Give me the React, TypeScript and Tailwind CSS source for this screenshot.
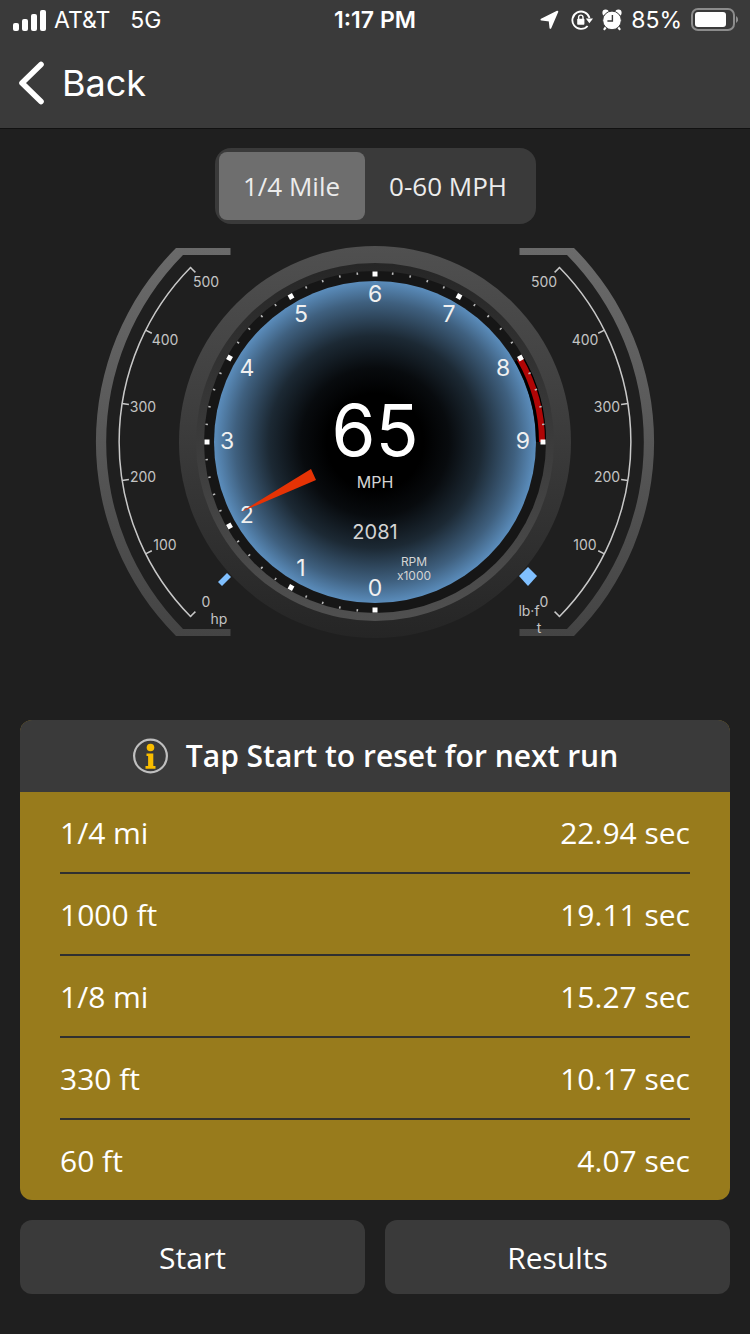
import React, { useState } from 'react';

interface Split {
  label: string;
  time: string;
}

const SPLITS: Split[] = [
  { label: '1/4 mi', time: '22.94 sec' },
  { label: '1000 ft', time: '19.11 sec' },
  { label: '1/8 mi', time: '15.27 sec' },
  { label: '330 ft', time: '10.17 sec' },
  { label: '60 ft', time: '4.07 sec' },
];

const MODES = [
  { id: 'quarter', label: '1/4 Mile', width: 'w-[146px]' },
  { id: 'sixty', label: '0-60 MPH', width: 'w-[167px]' },
];

// label positions of the side scales, relative to the dial centre
const SIDE_LABELS = [
  { value: 0, x: 169, y: 160 },
  { value: 100, x: 210, y: 103 },
  { value: 200, x: 232, y: 35 },
  { value: 300, x: 232, y: -35 },
  { value: 400, x: 210, y: -102 },
  { value: 500, x: 169, y: -160 },
];

const rad = (deg: number) => (deg * Math.PI) / 180;

const StatusBar: React.FC = () => (
  <div className="relative flex h-10 items-center justify-between px-3 text-[23px] leading-10">
    <div className="flex items-center">
      <svg width="34" height="22" viewBox="0 0 34 22" fill="#fff" aria-hidden="true">
        <rect x="1" y="14" width="6" height="8" rx="2" />
        <rect x="10" y="10" width="6" height="12" rx="2" />
        <rect x="19" y="5" width="6" height="17" rx="2" />
        <rect x="28" y="1" width="6" height="21" rx="2" />
      </svg>
      <span className="ml-2">AT&amp;T</span>
      <span className="ml-5">5G</span>
    </div>
    <span className="absolute inset-x-0 text-center font-semibold">1:17 PM</span>
    <div className="flex items-center">
      <svg width="19" height="20" viewBox="0 0 19 20" aria-hidden="true">
        <path d="M17.4 1.6 L10.4 17.8 L9.6 10.6 L1.4 9.6 Z" fill="#fff" stroke="#fff" strokeWidth="1.8" strokeLinejoin="round" />
      </svg>
      <svg className="ml-3" width="22" height="22" viewBox="0 0 22 22" aria-hidden="true">
        <path d="M16.6 17 A8.7 8.7 0 1 1 18.5 9" fill="none" stroke="#fff" strokeWidth="1.8" />
        <path d="M14.8 9.4 H22 L18.4 14.2 Z" fill="#fff" />
        <rect x="6.2" y="9.8" width="7.2" height="6" rx="0.8" fill="#fff" />
        <path d="M7.6 10.2 V8.3 a2.2 2.2 0 0 1 4.4 0 V10.2" fill="none" stroke="#fff" strokeWidth="1.4" />
      </svg>
      <svg className="ml-2" width="22" height="22" viewBox="0 0 22 22" aria-hidden="true">
        <circle cx="4.6" cy="3.8" r="3.2" fill="#fff" />
        <circle cx="17.4" cy="3.8" r="3.2" fill="#fff" />
        <path d="M5 18 L3.4 20.2 M17 18 L18.6 20.2" stroke="#fff" strokeWidth="2.2" strokeLinecap="round" />
        <circle cx="11" cy="11.4" r="9.3" fill="#fff" stroke="#3a3a3a" strokeWidth="1" />
        <path d="M11.4 6 V12 H6.4" fill="none" stroke="#3a3a3a" strokeWidth="1.4" />
      </svg>
      <span className="ml-2">85%</span>
      <svg className="ml-2" width="48" height="24" viewBox="0 0 48 24" aria-hidden="true">
        <rect x="2" y="1" width="42" height="21" rx="6" fill="none" stroke="#8c8c8c" strokeWidth="2" />
        <rect x="5" y="4" width="31" height="15" rx="3" fill="#fff" />
        <path d="M46 8 a4 4 0 0 1 0 7 Z" fill="#8c8c8c" />
      </svg>
    </div>
  </div>
);

const SideScale: React.FC<{ side: 'left' | 'right' }> = ({ side }) => {
  const dir = side === 'left' ? -1 : 1;
  return (
    <g>
      <g transform={side === 'right' ? 'scale(-1 1)' : undefined}>
        <path
          d="M-144.5 -194 H-199 A275 275 0 0 0 -199 194 H-144.5 V187 H-192 A266 266 0 0 1 -192 -187 H-144.5 Z"
          fill="url(#bracket)"
        />
        <path d="M-184 -175 A249 249 0 0 0 -184 175" fill="none" stroke="#c8c8c8" strokeWidth="1.5" />
        {SIDE_LABELS.map(({ value }) => {
          const a = rad((value / 100 - 2.5) * 17.8);
          return (
            <line
              key={value}
              x1={-7 - 249 * Math.cos(a)}
              y1={-249 * Math.sin(a)}
              x2={-7 - 242 * Math.cos(a)}
              y2={-242 * Math.sin(a)}
              stroke="#c8c8c8"
              strokeWidth="1.5"
            />
          );
        })}
      </g>
      {SIDE_LABELS.map(({ value, x, y }) => (
        <text key={value} x={dir * x} y={y + 5} fontSize="14" fill="#c4c4c4" textAnchor="middle">
          {value}
        </text>
      ))}
    </g>
  );
};

const Gauge: React.FC<{ speed: number; rpm: number }> = ({ speed, rpm }) => {
  const ticks = Array.from({ length: 46 }, (_, i) => i);
  const numbers = Array.from({ length: 10 }, (_, i) => i);

  return (
    <svg
      className="w-full max-w-[560px] font-['Inter',sans-serif]"
      viewBox="-280 -200 560 400"
      role="img"
      aria-label={`${speed} MPH, ${rpm} RPM`}
    >
      <defs>
        <linearGradient id="bezel" x1="0" y1="0" x2="0" y2="1">
          <stop offset="0" stopColor="#505050" />
          <stop offset="1" stopColor="#252525" />
        </linearGradient>
        <linearGradient id="bezelInner" x1="0" y1="0" x2="0" y2="1">
          <stop offset="0" stopColor="#262626" />
          <stop offset="1" stopColor="#505050" />
        </linearGradient>
        <linearGradient id="bracket" x1="0" y1="0" x2="0" y2="1">
          <stop offset="0" stopColor="#6a6a6a" />
          <stop offset="1" stopColor="#444444" />
        </linearGradient>
        <radialGradient id="face">
          <stop offset="0.3" stopColor="#000000" />
          <stop offset="0.46" stopColor="#080b0e" />
          <stop offset="0.66" stopColor="#1c2934" />
          <stop offset="0.87" stopColor="#3f607f" />
          <stop offset="1" stopColor="#5b8dbc" />
        </radialGradient>
      </defs>

      <SideScale side="left" />
      <SideScale side="right" />

      {/* Bezel and dial face */}
      <circle r="196" fill="url(#bezel)" />
      <circle r="179" fill="url(#bezelInner)" />
      <circle r="171" fill="#161616" />
      <circle r="161" fill="url(#face)" />

      {/* Redline from 8 to 9 */}
      <path d="M144 -83 A166 166 0 0 1 166 0" fill="none" stroke="#000" strokeWidth="10" />
      <path d="M144.5 -83.5 A167 167 0 0 1 167 0" fill="none" stroke="#b00606" strokeWidth="6" />

      {ticks.map((i) =>
        i % 5 === 0 ? (
          <rect key={i} x="-2.5" y="165.5" width="5" height="5" fill="#fff" transform={`rotate(${i * 6})`} />
        ) : (
          <rect key={i} x="-0.8" y="168" width="1.6" height="2.4" fill="#bbb" transform={`rotate(${i * 6})`} />
        )
      )}

      {numbers.map((n) => (
        <text
          key={n}
          x={-148 * Math.sin(rad(n * 30))}
          y={147 * Math.cos(rad(n * 30)) + 7}
          fontSize="23"
          fill="#f0f0f0"
          textAnchor="middle"
        >
          {n}
        </text>
      ))}

      {/* Side scale markers and units */}
      <path d="M-148 131 L-144 135 L-153 144 L-157 140 Z" fill="#80c0ff" />
      <path d="M144 134 L153 125 L162 134 L153 144 Z" fill="#80c0ff" />
      <g fontSize="14" fill="#c4c4c4" textAnchor="middle">
        <text x="-156" y="182">hp</text>
        <text x="154" y="174">lb·f</text>
        <text x="164" y="191">t</text>
      </g>

      <path d="M-134 70 L-64 27 L-59 38 Z" fill="#e53305" />

      <g textAnchor="middle" fill="#d4d4d4">
        <text y="14" fontSize="71" fill="#fff">{speed}</text>
        <text y="46" fontSize="16">MPH</text>
        <text y="97" fontSize="20">{rpm}</text>
        <text x="39" y="124" fontSize="12">RPM</text>
        <text x="39" y="138" fontSize="12">x1000</text>
      </g>
    </svg>
  );
};

const InfoIcon: React.FC = () => (
  <svg width="36" height="36" viewBox="0 0 36 36" aria-hidden="true">
    <circle cx="18.5" cy="18" r="16.4" fill="none" stroke="#bfbfbf" strokeWidth="2.2" />
    <circle cx="18.5" cy="9.5" r="3.8" fill="#f9bd00" />
    <path d="M14.5 15.6 H21.3 V28 H23.5 V30.8 H13.5 V28 H16.1 V18 H14.5 Z" fill="#f9bd00" />
  </svg>
);

const App: React.FC = () => {
  const [mode, setMode] = useState('quarter');

  return (
    <div className="flex min-h-screen flex-col bg-[#1f1f1f] font-['Open_Sans','Noto_Sans',sans-serif] text-white">
      {/* Header */}
      <header className="border-b border-[#111111] bg-[#3a3a3a] font-['Inter',sans-serif]">
        <StatusBar />
        <nav className="flex h-[88px] items-start pl-[18px] pt-5">
          <button className="flex items-center gap-[18px] text-[36px] leading-[46px]">
            <svg width="26" height="44" viewBox="0 0 26 44" fill="none" aria-hidden="true">
              <path d="M23 3.5 L4 22 L23 40.5" stroke="#fff" strokeWidth="5.6" strokeLinecap="round" strokeLinejoin="round" />
            </svg>
            <span>Back</span>
          </button>
        </nav>
      </header>

      <main className="flex flex-1 flex-col items-center px-5 pb-10 pt-[19px]">
        {/* Mode switch */}
        <div className="flex h-[76px] rounded-2xl bg-[#3a3a3a] p-1">
          {MODES.map((m) => (
            <button
              key={m.id}
              onClick={() => setMode(m.id)}
              aria-pressed={mode === m.id}
              className={`${m.width} rounded-lg text-[26px] text-[#ececec] ${mode === m.id ? 'bg-[#6e6e6e]' : ''}`}
            >
              {m.label}
            </button>
          ))}
        </div>

        <div className="mt-[18px] flex w-full justify-center">
          <Gauge speed={65} rpm={2081} />
        </div>

        {/* Results card */}
        <section className="mt-auto w-full overflow-hidden rounded-xl bg-[#987b1c]">
          <div className="flex h-[72px] items-center justify-center gap-[18px] bg-[#3a3a3a]">
            <InfoIcon />
            <h1 className="text-[30px] font-semibold leading-10">Tap Start to reset for next run</h1>
          </div>
          <div className="px-10">
            <table className="w-full border-separate border-spacing-0 text-[30px]">
              <tbody>
                {SPLITS.map((s) => (
                  <tr key={s.label} className="group">
                    <th
                      scope="row"
                      className="h-[82px] border-b-2 border-[#303030] p-0 text-left font-normal group-last:h-20 group-last:border-b-0"
                    >
                      {s.label}
                    </th>
                    <td className="border-b-2 border-[#303030] p-0 text-right group-last:border-b-0">{s.time}</td>
                  </tr>
                ))}
              </tbody>
            </table>
          </div>
        </section>

        <div className="mt-5 grid w-full grid-cols-2 gap-5">
          <button className="h-[74px] rounded-xl bg-[#3a3a3a] text-[30px]">Start</button>
          <button className="h-[74px] rounded-xl bg-[#3a3a3a] text-[30px]">Results</button>
        </div>
      </main>
    </div>
  );
};

export default App;
